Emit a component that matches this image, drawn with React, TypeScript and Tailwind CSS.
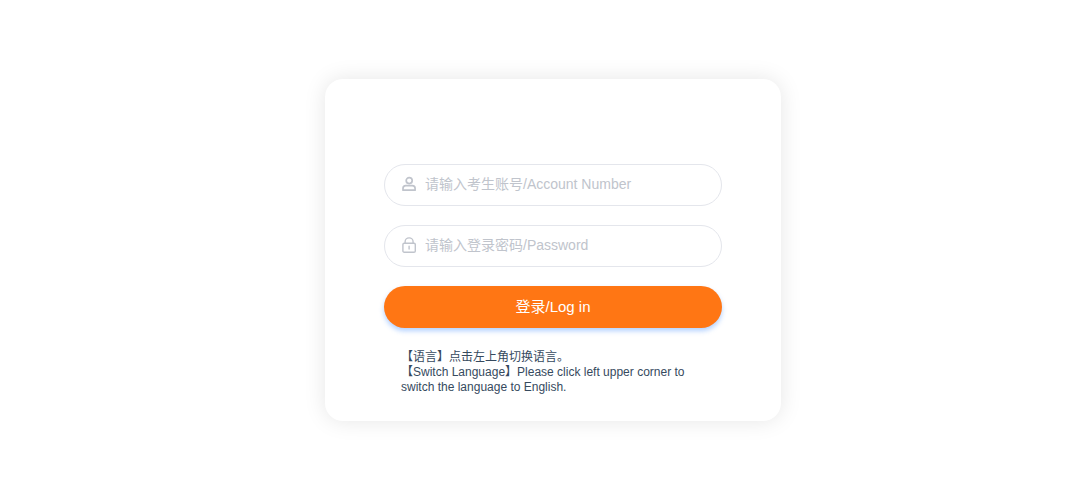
import React, { useState } from "react";

function UserIcon() {
  return (
    <svg viewBox="0 0 14 16" className="h-4 w-3.5" fill="none" stroke="currentColor" strokeWidth="1.7" strokeLinejoin="round" aria-hidden="true">
      <circle cx="7.2" cy="4.6" r="3" />
      <path d="M1 14.200v-1.600c0-1.900 1-2.900 2.800-2.900h6.500c1.800 0 2.800 1 2.800 2.900v1.600z" />
    </svg>
  );
}

function LockIcon() {
  return (
    <svg viewBox="0 0 14 16" className="h-4 w-3.5" fill="none" stroke="currentColor" strokeWidth="1.4" strokeLinecap="round" aria-hidden="true">
      <rect x=".9" y="6.300" width="12.400" height="8.900" rx="1.300" />
      <path d="M3.100 6.300V4.900a4 4 0 0 1 8 0v1.400M7.100 9.300v2.800" />
    </svg>
  );
}

type FieldProps = {
  id: string;
  type: string;
  placeholder: string;
  icon: React.ReactNode;
  value: string;
  onChange: (value: string) => void;
};

function Field({ id, type, placeholder, icon, value, onChange }: FieldProps) {
  return (
    <div className="flex h-[42px] items-center gap-[9px] rounded-full border border-[#e4e6ec] bg-white px-[17px] pb-0.5 text-[#c0c4cc] focus-within:border-[#ff7614]">
      <label htmlFor={id} aria-label={placeholder} className="shrink-0">
        {icon}
      </label>
      <input
        id={id}
        type={type}
        placeholder={placeholder}
        value={value}
        onChange={(e) => onChange(e.target.value)}
        className="min-w-0 flex-1 bg-transparent text-[14px] text-[#606266] outline-none placeholder:text-[#c0c4cc]"
      />
    </div>
  );
}

export default function App() {
  const [account, setAccount] = useState("");
  const [password, setPassword] = useState("");

  return (
    <main className="flex min-h-screen justify-center bg-white pt-[79px] pb-10 pl-[26px] font-['Liberation_Sans','Noto_Sans_CJK_SC',sans-serif]">
      <section className="w-full max-w-[456px] self-start rounded-[18px] bg-white px-[59px] pt-[85px] pb-[26px] shadow-[0_0_22px_rgba(0,0,0,0.1)]">
        <form className="flex flex-col gap-[19px]" onSubmit={(e) => e.preventDefault()}>
          <Field id="account" type="text" placeholder="请输入考生账号/Account Number" icon={<UserIcon />} value={account} onChange={setAccount} />
          <Field id="password" type="password" placeholder="请输入登录密码/Password" icon={<LockIcon />} value={password} onChange={setPassword} />
          <button type="submit" className="h-[42px] cursor-pointer rounded-full bg-[#ff7614] text-[15px] text-white shadow-[0_3px_5px_rgba(64,140,255,0.4)]">
            登录/Log in
          </button>
        </form>
        <div className="mt-[22px] px-[17px] text-[12px] leading-[15px] text-[#364a5e]">
          <p>【语言】点击左上角切换语言。</p>
          <p>【Switch Language】Please click left upper corner to switch the language to English.</p>
        </div>
      </section>
    </main>
  );
}
